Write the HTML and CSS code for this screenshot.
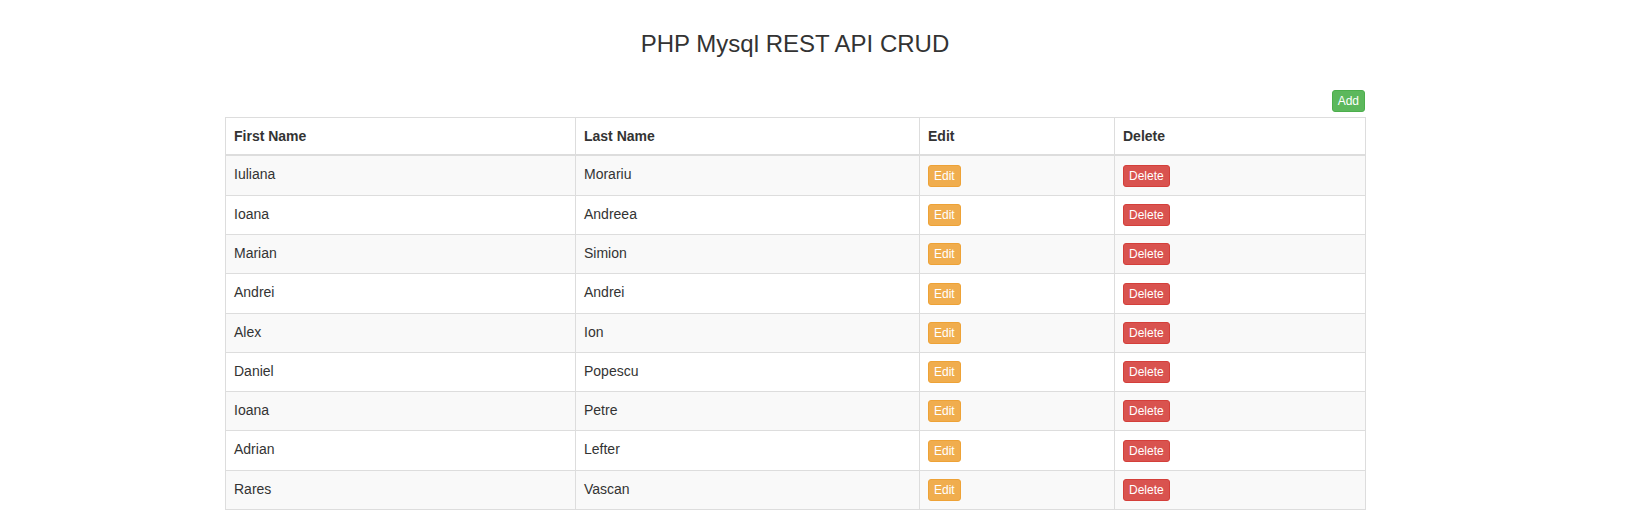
FILE: index.html
```html
<!DOCTYPE html>
<html lang="en">
<head>
<meta charset="utf-8">
<title>PHP Mysql REST API CRUD</title>
<link rel="stylesheet" href="styles.css">
</head>
<body>
<div class="container">
  <h3 class="title">PHP Mysql REST API CRUD</h3>
  <div class="toolbar">
    <button class="btn btn-success">Add</button>
  </div>
  <table class="table">
    <colgroup>
      <col class="c1"><col class="c2"><col class="c3"><col class="c4">
    </colgroup>
    <thead>
      <tr><th>First Name</th><th>Last Name</th><th>Edit</th><th>Delete</th></tr>
    </thead>
    <tbody>
      <tr><td>Iuliana</td><td>Morariu</td><td><button class="btn btn-warning">Edit</button></td><td><button class="btn btn-danger">Delete</button></td></tr>
      <tr><td>Ioana</td><td>Andreea</td><td><button class="btn btn-warning">Edit</button></td><td><button class="btn btn-danger">Delete</button></td></tr>
      <tr><td>Marian</td><td>Simion</td><td><button class="btn btn-warning">Edit</button></td><td><button class="btn btn-danger">Delete</button></td></tr>
      <tr><td>Andrei</td><td>Andrei</td><td><button class="btn btn-warning">Edit</button></td><td><button class="btn btn-danger">Delete</button></td></tr>
      <tr><td>Alex</td><td>Ion</td><td><button class="btn btn-warning">Edit</button></td><td><button class="btn btn-danger">Delete</button></td></tr>
      <tr><td>Daniel</td><td>Popescu</td><td><button class="btn btn-warning">Edit</button></td><td><button class="btn btn-danger">Delete</button></td></tr>
      <tr><td>Ioana</td><td>Petre</td><td><button class="btn btn-warning">Edit</button></td><td><button class="btn btn-danger">Delete</button></td></tr>
      <tr><td>Adrian</td><td>Lefter</td><td><button class="btn btn-warning">Edit</button></td><td><button class="btn btn-danger">Delete</button></td></tr>
      <tr><td>Rares</td><td>Vascan</td><td><button class="btn btn-warning">Edit</button></td><td><button class="btn btn-danger">Delete</button></td></tr>
    </tbody>
  </table>
</div>
</body>
</html>
```

FILE: styles.css
```css
* { box-sizing: border-box; }

html, body {
  margin: 0;
  padding: 0;
  background: #fff;
}

body {
  font-family: "Liberation Sans", Arial, Helvetica, sans-serif;
  font-size: 14px;
  line-height: 20px;
  color: #333;
}

.container {
  width: 1170px;
  margin-left: 210px;
  padding: 0 15px;
}

.title {
  margin: 31px 0 0;
  font-size: 24px;
  font-weight: 400;
  line-height: 1.1;
  text-align: center;
  color: #333;
}

.toolbar {
  display: flex;
  justify-content: flex-end;
  margin-top: 33px;
}

.btn {
  display: inline-block;
  font-family: "Liberation Sans", Arial, Helvetica, sans-serif;
  font-size: 12px;
  font-weight: 400;
  line-height: 18px;
  padding: 1px 5px;
  border: 1px solid transparent;
  border-radius: 3px;
  color: #fff;
  vertical-align: middle;
  cursor: pointer;
  margin: 0;
}

.btn-success { background: #5cb85c; border-color: #4cae4c; }
.btn-warning { background: #f0ad4e; border-color: #eea236; }
.btn-danger  { background: #d9534f; border-color: #d43f3a; }

.table {
  width: 1140px;
  margin-top: 5px;
  border-collapse: collapse;
  border-spacing: 0;
  border: 1px solid #ddd;
  table-layout: fixed;
}

.c1 { width: 350px; }
.c2 { width: 344px; }
.c3 { width: 195px; }
.c4 { width: 251px; }

.table th,
.table td {
  padding: 8px;
  border: 1px solid #ddd;
  text-align: left;
  vertical-align: top;
  line-height: 20px;
}

.table th {
  font-weight: 700;
  border-bottom-width: 2px;
  vertical-align: bottom;
}

.table tbody tr:nth-child(odd) {
  background: #f9f9f9;
}
```
